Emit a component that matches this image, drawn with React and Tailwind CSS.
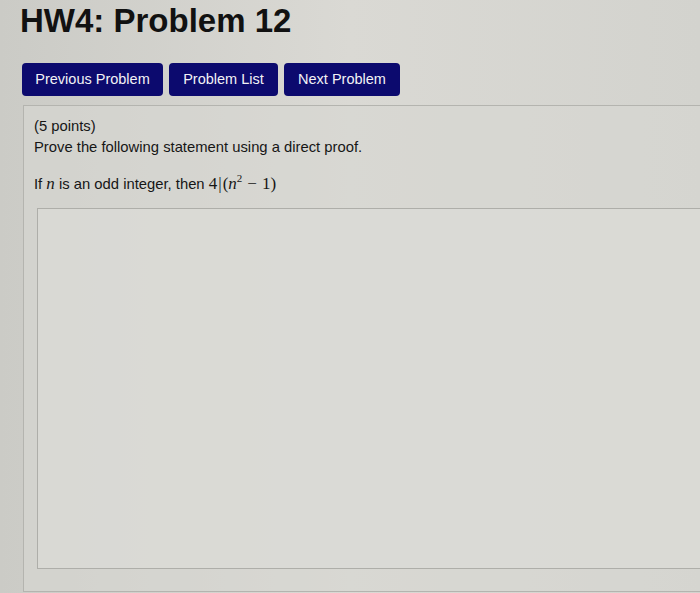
export default function App() {
  return (
    <div
      className="h-[593px] w-[700px] overflow-hidden bg-linear-to-r from-[#cbcbc6] via-[#dad9d4] to-[#d3d3ce] text-[#161616]"
      style={{ fontFamily: '"Liberation Sans", Arial, sans-serif' }}
    >
      <h1 className="pl-[20px] pt-[1px] text-[33px] leading-[40px] font-bold text-[#111]">
        HW4: Problem 12
      </h1>

      <div className="mt-[22px] flex gap-[6px] pl-[22px]">
        <button className="h-[33px] w-[141px] rounded-[4px] bg-[#0c0a6e] text-[14.5px] text-[#f2f2f5]">
          Previous Problem
        </button>
        <button className="h-[33px] w-[109px] rounded-[4px] bg-[#0c0a6e] text-[14.5px] text-[#f2f2f5]">
          Problem List
        </button>
        <button className="h-[33px] w-[116px] rounded-[4px] bg-[#0c0a6e] text-[14.5px] text-[#f2f2f5]">
          Next Problem
        </button>
      </div>

      <div className="mt-[9px] ml-[23px] w-[700px] border border-[#b4b4af] bg-[#d7d7d2]/60 pt-[10px] pb-[22px] pl-[10px]">
        <div className="text-[14.8px] leading-[21px]">(5 points)</div>
        <div className="text-[14.8px] leading-[21px]">
          Prove the following statement using a direct proof.
        </div>
        <div className="mt-[15px] h-[21px] text-[14.8px] leading-[21px]">
          If{" "}
          <span
            className="text-[17px] italic"
            style={{ fontFamily: '"Liberation Serif", "Times New Roman", serif' }}
          >
            n
          </span>{" "}
          is an odd integer, then{" "}
          <span
            className="text-[17px]"
            style={{ fontFamily: '"Liberation Serif", "Times New Roman", serif' }}
          >
            4<span className="mx-[1px]">|</span>(<span className="italic">n</span>
            <span className="relative top-[-7px] text-[11px] leading-none">2</span>
            <span className="mx-[5px]">−</span>1)
          </span>
        </div>
        <div className="mt-[14px] ml-[3px] h-[361px] w-[700px] border border-[#aeaea9] bg-[#dcdcd7]/70"></div>
      </div>
    </div>
  );
}
